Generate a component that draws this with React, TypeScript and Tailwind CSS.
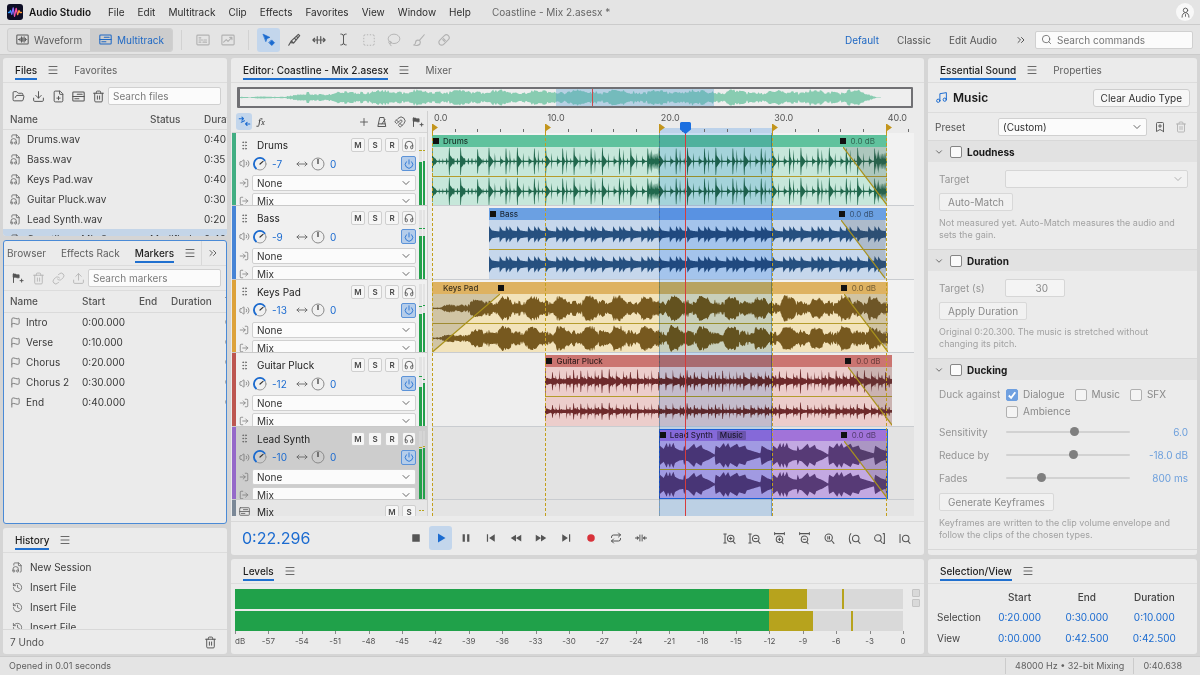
import type { ReactNode } from "react";
import {
  BookmarkPlus,
  ChevronDown,
  ChevronsRight,
  Download,
  FileAudio,
  FilePlus,
  Flag,
  FolderOpen,
  GripVertical,
  Headphones,
  History,
  Lasso,
  Link,
  LogIn,
  LogOut,
  Magnet,
  Menu,
  MoveHorizontal,
  Music,
  Plus,
  Power,
  Repeat,
  Search,
  SquareDashed,
  TextCursor,
  Trash2,
  Upload,
  Volume2,
} from "lucide-react";

const VIEW_SECONDS = 42.5;
const BAR = 2.5;
const SELECTION = { start: 20, end: 30 };
const PLAYHEAD = 22.296;
const SAMPLES_PER_SECOND = 22;

const pct = (seconds: number) => `${(seconds / VIEW_SECONDS) * 100}%`;

/* ---------- waveform data ---------- */

type Envelope = (t: number, channel: number) => number;
type Point = [number, number];

const noise = (n: number) => {
  const v = Math.sin(n * 127.1 + 311.7) * 43758.5453;
  return v - Math.floor(v);
};

function interpolate(points: Point[], x: number) {
  for (let i = 1; i < points.length; i++) {
    if (x <= points[i][0]) {
      const [x0, y0] = points[i - 1];
      const [x1, y1] = points[i];
      return y0 + ((y1 - y0) * (x - x0)) / (x1 - x0 || 1);
    }
  }
  return points[points.length - 1][1];
}

function drumHits() {
  const hits: [number, number, number][] = [
    [0, 0.75, 0.5],
    [1.5, 0.95, 0.5],
    [2.5, 0.95, 0.5],
    [4, 0.85, 0.5],
  ];
  for (let t = 0.3; t < 5; t += 0.32) hits.push([t, 0.22, 0.08]);
  for (let bar = 2; bar < 16; bar++) {
    const at = bar * BAR;
    hits.push(
      [at, 0.95, 0.45],
      [at + 0.52, 0.6, 0.1],
      [at + 1.02, 0.42, 0.35],
      [at + 1.5, 0.9, 0.25],
      [at + 1.84, 0.85, 0.14],
      [at + 2.2, 0.25, 0.16],
    );
  }
  for (const fill of [19, 39]) {
    for (let i = 0; i < 9; i++) hits.push([fill + i * 0.12, 0.95 - noise(i + 3) * 0.45, 0.2]);
  }
  return hits;
}

const DRUM_HITS = drumHits();

const drums: Envelope = (t) => {
  let level = 0.05;
  for (const [at, amp, decay] of DRUM_HITS) {
    const d = t - at;
    if (d < 0 || d > decay) continue;
    const body = d < 0.06 ? amp : amp * 0.55 * (1 - d / decay);
    level = Math.max(level, body);
  }
  return level;
};

const bass: Envelope = (t) => {
  const phase = t % BAR;
  const steps = [0, 0.94, 1.5, 1.8, BAR];
  const i = steps.findIndex((s, n) => phase >= s && phase < steps[n + 1]);
  const d = phase - steps[i];
  return 0.16 + 0.18 * Math.exp(-d * 1.6) + (d < 0.25 ? 0.24 * (1 - d / 0.25) : 0);
};

const KEY_SHAPE: Point[] = [[0, 0.5], [0.2, 0.7], [0.35, 0.94], [0.95, 0.9], [1.2, 0.74], [1.4, 0.52], [1.8, 0.64], [2.1, 0.5], [2.5, 0.46]];

const keys: Envelope = (t, channel) => {
  const n = Math.floor(t * 11) + channel * 91;
  const bar = Math.floor((t + 1.8) / BAR);
  const swell = 0.86 + 0.14 * noise(bar);
  const level = interpolate(KEY_SHAPE, (t + 1.8) % BAR) * swell - noise(n) * 0.26;
  return level * Math.min(1, 0.1 + t / 6);
};

const guitar: Envelope = (t, channel) => {
  const step = 0.625;
  const n = Math.floor(t / step);
  const d = t - n * step;
  const swell = Math.abs(Math.sin((t - 1.2) * 0.42));
  const core = 0.09 + (0.1 + 0.22 * swell) * Math.exp(-d * 3.5) + noise(Math.floor(t * 11) + channel * 7) * 0.08;
  const accent = d < 0.06 ? 0.6 + 0.25 * noise(n) : 0;
  const offbeat = noise(n + 40) > 0.45 && d > 0.3 && d < 0.37 ? 0.42 : 0;
  return Math.max(core, accent, offbeat) * (channel ? 0.72 : 1);
};

const LEAD_SHAPE: Point[] = [
  [0, 20], [2, 26], [14, 17], [23, 33], [27, 20], [33, 34], [36, 20], [43, 34], [48, 20], [60, 14], [73, 12],
  [75, 28], [80, 14], [88, 16], [105, 31], [111, 19], [127, 28], [131, 18], [150, 11], [167, 2], [169, 26],
  [182, 19], [194, 33], [199, 22], [207, 33], [213, 20], [234, 31], [240, 21], [258, 26], [263, 16], [304, 5],
  [307, 26], [325, 16], [339, 12], [340, 20],
];

const lead: Envelope = (t) => interpolate(LEAD_SHAPE, (t % 10) * 34) / 38;

const overview: Envelope = (t) => {
  const n = Math.floor(t * 11);
  const grow = t < 3 ? 0.12 : Math.min(1, 0.3 + (t - 3) / 7);
  const swell = 0.34 + 0.65 * interpolate(KEY_SHAPE, (t + 1.8) % BAR);
  const spike = [4.2, 7].some((at) => t >= at && t < at + 0.2) ? 0.65 : 0;
  const tail = t > 39.4 ? Math.max(0.02, 40.4 - t) : 1;
  return Math.max(spike, grow * (swell - noise(n) * 0.3)) * tail;
};

function wavePath(envelope: Envelope, seconds: number, channel: number) {
  const count = Math.round(seconds * SAMPLES_PER_SECOND);
  const top: string[] = [];
  const bottom: string[] = [];
  for (let i = 0; i <= count; i++) {
    const level = Math.max(0.03, Math.min(0.98, envelope(i / SAMPLES_PER_SECOND, channel)));
    top.push(`${i} ${(-level).toFixed(3)}`);
    bottom.unshift(`${i} ${level.toFixed(3)}`);
  }
  return `M${top.join("L")}L${bottom.join("L")}Z`;
}

type Clip = {
  start: number;
  end: number;
  fadeIn?: number;
  fadeOut: number;
  tag?: string;
  head: string;
  body: string;
  wave: string;
  paths: string[];
};

type Track = {
  name: string;
  volume: number;
  strip: string;
  meters: [number, number];
  peaks: [number, number];
  peakColor: string;
  selected?: boolean;
  clip: Clip;
};

function makeClip(envelope: Envelope, clip: Omit<Clip, "paths">): Clip {
  const seconds = clip.end - clip.start;
  return { ...clip, paths: [0, 1].map((channel) => wavePath(envelope, seconds, channel)) };
}

const TRACKS: Track[] = [
  {
    name: "Drums", volume: -7, strip: "bg-[#41ae82]", meters: [64, 65], peaks: [79, 79], peakColor: "bg-[#b9a61c]",
    clip: makeClip(drums, { start: 0, end: 40.1, fadeOut: 3.9, head: "bg-[#5fc29d]", body: "bg-[#c6e7da]", wave: "fill-[#21684d]" }),
  },
  {
    name: "Bass", volume: -9, strip: "bg-[#4684d6]", meters: [63, 63], peaks: [73, 73], peakColor: "bg-[#22a04a]",
    clip: makeClip(bass, { start: 5, end: 40, fadeOut: 3.9, head: "bg-[#6ba0e2]", body: "bg-[#c6d7ec]", wave: "fill-[#26507f]" }),
  },
  {
    name: "Keys Pad", volume: -13, strip: "bg-[#dda23a]", meters: [56, 58], peaks: [66, 68], peakColor: "bg-[#22a04a]",
    clip: makeClip(keys, { start: 0, end: 40.2, fadeIn: 6, fadeOut: 3.9, head: "bg-[#deb261]", body: "bg-[#f2e3bb]", wave: "fill-[#77591f]" }),
  },
  {
    name: "Guitar Pluck", volume: -12, strip: "bg-[#bd5650]", meters: [56, 62], peaks: [71, 67], peakColor: "bg-[#22a04a]",
    clip: makeClip(guitar, { start: 10, end: 40.6, fadeOut: 3.9, head: "bg-[#cb7571]", body: "bg-[#eccdcb]", wave: "fill-[#6e2a2b]" }),
  },
  {
    name: "Lead Synth", volume: -10, strip: "bg-[#9568c9]", meters: [73, 74], peaks: [75, 76], peakColor: "bg-[#b9a61c]", selected: true,
    clip: makeClip(lead, { start: 20, end: 40.2, fadeOut: 3.9, tag: "Music", head: "bg-[#a173d9]", body: "bg-[#c3a9e2]", wave: "fill-[#573a76]" }),
  },
];

const OVERVIEW_PATH = wavePath(overview, 40.6, 0);

/* ---------- small icons ---------- */

function Glyph({ children, className = "size-3" }: { children: ReactNode; className?: string }) {
  return (
    <svg viewBox="0 0 16 16" className={`shrink-0 ${className}`} fill="none" stroke="currentColor" strokeWidth="1.3" strokeLinecap="round" strokeLinejoin="round" aria-hidden="true">
      {children}
    </svg>
  );
}

const WaveBoxIcon = () => (
  <Glyph className="size-[13px]">
    <rect x="1" y="2.5" width="14" height="11" rx="1" />
    <path d="M3 8h1M5 6.5v3M6.7 4.8v6.4M8.3 6v4M10 4.8v6.4M11.6 6.5v3M13 8h.2" />
  </Glyph>
);

const TracksIcon = ({ className = "size-[13px]" }: { className?: string }) => (
  <Glyph className={className}>
    <rect x="1" y="2.5" width="14" height="11" rx="1" />
    <path d="M1 8h14M6.5 5.3h6M3.5 10.8h5" />
  </Glyph>
);

const SpectralIcon = () => (
  <Glyph className="size-[14px]">
    <rect x="1" y="2.5" width="14" height="11" rx="1" />
    <path d="M3.5 5.5h2M3.5 8h4M9 8h3M3.5 10.5h2M8 10.5h4" />
  </Glyph>
);

const ChartBoxIcon = () => (
  <Glyph className="size-[14px]">
    <rect x="1" y="2.5" width="14" height="11" rx="1" />
    <path d="M3 10.5l3-3 2 2L12.5 5M10 5h2.5v2.5" />
  </Glyph>
);

const MoveToolIcon = () => (
  <Glyph className="size-[14px]">
    <path d="M1.5 1.5l7.5 3.5-3.3 1.2-1.2 3.3z" fill="currentColor" strokeWidth="0.8" />
    <path d="M11.2 8.2l3 3-3 3-3-3z" fill="currentColor" strokeWidth="1" />
  </Glyph>
);

const RazorIcon = () => (
  <Glyph className="size-[14px]">
    <path d="M13 1.5l1.5 1.5-7 8.5-2.5-2.5zM5 9l-3 5M7.500 11.500L4.500 11M9 6.500l1.500 1.500M11 4l1.500 1.500" />
  </Glyph>
);

const SlipIcon = () => (
  <Glyph className="size-[14px]">
    <path d="M1 8h14M3 6L1 8l2 2M13 6l2 2-2 2M6 4v8M10 4v8" />
  </Glyph>
);

const BrushIcon = () => (
  <Glyph className="size-[14px]">
    <path d="M14 2L8.5 8.5M8.5 8.5c-2-1-4.5 0-4.5 2.5 0 1.5-.8 2.3-2 2.8 3.5 1 7.5.2 7.500-3 0-1-.4-1.800-1-2.300z" />
  </Glyph>
);

const HealIcon = () => (
  <Glyph className="size-[14px]">
    <rect x="1" y="4.8" width="14" height="6.4" rx="3.2" transform="rotate(-45 8 8)" />
    <path d="M7.500 6.500l2 2M6.500 7.500l2 2" />
  </Glyph>
);

const FlagPlusIcon = () => (
  <Glyph className="size-3">
    <path d="M2 14V2.5" />
    <path d="M2 2.8h3l1 1h3.500v4H6.500l-1-.8H2z" fill="currentColor" strokeWidth="1" />
    <path d="M12.8 9.500v4M10.800 11.500h4" />
  </Glyph>
);

const MetronomeIcon = () => (
  <Glyph className="size-3">
    <path d="M5.5 2h5l2.5 12H3zM3.8 10.5h8.4M8 10.5l4-6" />
  </Glyph>
);

const SnapIcon = () => (
  <Glyph className="size-[13px]">
    <path d="M1.5 4.5h5M4.8 2.5l2 2-2 2M14.5 11h-5M11.2 9l-2 2 2 2M4 9l4-2" />
  </Glyph>
);

const PersonIcon = () => (
  <Glyph className="size-[11px]">
    <circle cx="8" cy="4.8" r="3.2" />
    <path d="M3 14.800c0-4 2-6.500 5-6.500s5 2.500 5 6.500M8 11v2.500" />
  </Glyph>
);

function Logo() {
  return (
    <svg viewBox="0 0 16 16" className="size-4" aria-hidden="true">
      <rect width="16" height="16" rx="3" fill="#0d0d25" />
      <g fill="none" strokeWidth="1.3" strokeLinecap="round" strokeLinejoin="round">
        <path d="M1.5 8.5h1l1-2 1.2 3.5" stroke="#2f9bff" />
        <path d="M4.7 10L6.2 4l1.3 8" stroke="#8a6bff" />
        <path d="M7.5 12L9.2 4.5l1.4 6" stroke="#ff4fa0" />
        <path d="M10.6 10.5L12 6.5l1 2h1.5" stroke="#ff9a3c" />
      </g>
    </svg>
  );
}

/* ---------- shared controls ---------- */

function IconButton({ label, active, disabled, className = "size-5", children }: { label: string; active?: boolean; disabled?: boolean; className?: string; children: ReactNode }) {
  const tone = active ? "bg-[#c3d6ec] text-[#1b6bd0]" : disabled ? "text-[#b2b2b2]" : "text-[#555]";
  return (
    <button type="button" aria-label={label} disabled={disabled} className={`flex shrink-0 items-center justify-center rounded-[3px] ${tone} ${className}`}>
      {children}
    </button>
  );
}

function Tab({ label, active }: { label: string; active?: boolean }) {
  return (
    <button
      type="button"
      className={`h-[22px] shrink-0 border-b-2 pt-1 leading-4 whitespace-nowrap ${active ? "border-[#2070cf] font-medium text-[#1f1f1f]" : "border-transparent text-[#606060]"}`}
    >
      {label}
    </button>
  );
}

function PanelMenu({ label }: { label: string }) {
  return (
    <button type="button" aria-label={label} className="flex h-6 shrink-0 items-center text-[#5a5a5a]">
      <Menu className="size-3" strokeWidth={1.8} />
    </button>
  );
}

function SearchBox({ label }: { label: string }) {
  return (
    <input
      type="search"
      aria-label={label}
      placeholder={label}
      className="h-[18px] min-w-0 flex-1 rounded-[2px] border border-[#d0d0d0] bg-[#fbfbfb] px-1 leading-4 placeholder:text-[#7a7a7a]"
    />
  );
}

function Picker({ label, value, disabled, className = "" }: { label: string; value: string; disabled?: boolean; className?: string }) {
  return (
    <span className={`relative block min-w-0 ${className}`}>
      <select
        aria-label={label}
        disabled={disabled}
        className={`block size-full appearance-none rounded-[2px] border px-1 leading-3 ${disabled ? "border-[#d6d6d6] bg-[#f2f2f2]" : "border-[#d0d0d0] bg-[#fbfbfb] text-[#303030]"}`}
      >
        <option>{value}</option>
      </select>
      <ChevronDown className={`pointer-events-none absolute top-1/2 right-1 size-3 -translate-y-1/2 ${disabled ? "text-[#a8a8a8]" : "text-[#555]"}`} strokeWidth={1.8} />
    </span>
  );
}

const PANEL = "flex min-h-0 min-w-0 flex-col overflow-hidden rounded-[3px] bg-[#ebebeb]";
const TAB_ROW = "flex h-[25px] shrink-0 gap-[10px] border-b border-[#dcdcdc]";

/* ---------- top bars ---------- */

const MENUS = ["File", "Edit", "Multitrack", "Clip", "Effects", "Favorites", "View", "Window", "Help"];

function TitleBar() {
  return (
    <header className="flex h-[25px] shrink-0 items-center border-b border-[#cbcbcb] bg-[#e4e4e4] pr-[6px] pl-[7px]">
      <Logo />
      <h1 className="ml-[6px] font-semibold text-[#141414]">Audio Studio</h1>
      <nav className="ml-[17px] flex gap-[13px]">
        {MENUS.map((menu) => (
          <button key={menu} type="button" className="text-[#2e2e2e]">{menu}</button>
        ))}
      </nav>
      <span className="ml-[21px] flex-1 text-[#666]">Coastline - Mix 2.asesx *</span>
      <button type="button" aria-label="Account" className="flex size-[18px] items-center justify-center rounded-full bg-[#f8f8f8] text-[#555]">
        <PersonIcon />
      </button>
    </header>
  );
}

function ToolBar() {
  return (
    <div className="flex h-[30px] shrink-0 items-center border-b border-[#cbcbcb] bg-[#e4e4e4] pr-[7px] pl-[7px]">
      <div className="flex h-6 overflow-hidden rounded-[3px] border border-[#d0d0d0] bg-[#dfdfdf]">
        <button type="button" className="flex w-[82px] items-center gap-[5px] pl-2 text-[#5c5c5c]">
          <WaveBoxIcon />
          Waveform
        </button>
        <button type="button" aria-pressed="true" className="flex w-[82px] items-center gap-[5px] bg-[#cdcdcd] pl-[9px] text-[#2069c4]">
          <TracksIcon />
          Multitrack
        </button>
      </div>
      <div className="mx-2 h-5 w-px bg-[#d2d2d2]" />
      <div className="flex">
        <IconButton label="Spectral display" disabled className="h-6 w-[25px]"><SpectralIcon /></IconButton>
        <IconButton label="Pitch display" disabled className="h-6 w-[25px]"><ChartBoxIcon /></IconButton>
      </div>
      <div className="mx-2 h-5 w-px bg-[#d2d2d2]" />
      <div className="flex gap-[2px]">
        <IconButton label="Move" active className="h-6 w-[23px]"><MoveToolIcon /></IconButton>
        <IconButton label="Razor" className="h-6 w-[23px]"><RazorIcon /></IconButton>
        <IconButton label="Slip" className="h-6 w-[23px]"><SlipIcon /></IconButton>
        <IconButton label="Time selection" className="h-6 w-[23px]"><TextCursor className="size-[13px]" strokeWidth={1.8} /></IconButton>
        <IconButton label="Marquee selection" disabled className="h-6 w-[23px]"><SquareDashed className="size-[14px]" strokeWidth={1.6} /></IconButton>
        <IconButton label="Lasso selection" disabled className="h-6 w-[23px]"><Lasso className="size-[14px]" strokeWidth={1.6} /></IconButton>
        <IconButton label="Brush selection" disabled className="h-6 w-[23px]"><BrushIcon /></IconButton>
        <IconButton label="Spot healing" disabled className="h-6 w-[23px]"><HealIcon /></IconButton>
      </div>
      <div className="ml-auto flex items-center gap-[18px] text-[#555]">
        <button type="button" className="text-[#2069c4]">Default</button>
        <button type="button">Classic</button>
        <button type="button">Edit Audio</button>
        <button type="button" aria-label="More workspaces"><ChevronsRight className="size-3" strokeWidth={2} /></button>
      </div>
      <label className="ml-2 flex h-[18px] w-[158px] items-center gap-[5px] rounded-[2px] border border-[#d0d0d0] bg-[#fbfbfb] pl-[5px]">
        <Search className="size-[11px] shrink-0 text-[#666]" strokeWidth={1.8} />
        <input type="search" aria-label="Search commands" placeholder="Search commands" className="min-w-0 flex-1 bg-transparent placeholder:text-[#757575]" />
      </label>
    </div>
  );
}

/* ---------- left column ---------- */

const FILES = [
  ["Drums.wav", "", "0:40.000"],
  ["Bass.wav", "", "0:35.000"],
  ["Keys Pad.wav", "", "0:40.000"],
  ["Guitar Pluck.wav", "", "0:30.600"],
  ["Lead Synth.wav", "", "0:20.300"],
  ["Coastline - Mix 2.asesx", "Modified", "0:40.638"],
];

function FilesPanel() {
  return (
    <section className={`${PANEL} h-[178px] shrink-0`}>
      <div className={`${TAB_ROW} pl-3`}>
        <Tab label="Files" active />
        <PanelMenu label="Files panel menu" />
        <span className="ml-[5px] flex"><Tab label="Favorites" /></span>
      </div>
      <div className="flex h-[26px] shrink-0 items-center pr-[6px] pl-[5px]">
        <IconButton label="Open file"><FolderOpen className="size-[13px]" strokeWidth={1.8} /></IconButton>
        <IconButton label="Import file"><Download className="size-[13px]" strokeWidth={1.8} /></IconButton>
        <IconButton label="New file"><FilePlus className="size-[13px]" strokeWidth={1.8} /></IconButton>
        <IconButton label="New multitrack session"><TracksIcon /></IconButton>
        <IconButton label="Remove file"><Trash2 className="size-[13px]" strokeWidth={1.8} /></IconButton>
        <SearchBox label="Search files" />
      </div>
      <div className="min-h-0 flex-1 overflow-hidden">
        <table className="w-[270px] table-fixed text-left">
          <thead>
            <tr className="h-5 border-b border-[#dadada] text-[#555]">
              <th className="w-[140px] pl-[7px] font-medium">Name</th>
              <th className="w-[54px] pl-[7px] font-medium">Status</th>
              <th className="pl-[7px] font-medium">Duration</th>
            </tr>
          </thead>
          <tbody>
            {FILES.map(([name, status, duration], index) => (
              <tr key={name} className={`h-5 ${index === 5 ? "bg-[#c4d5e8]" : ""}`}>
                <td className="pl-[7px]">
                  <span className="flex items-center gap-[6px] whitespace-nowrap">
                    <FileAudio className="size-[11px] shrink-0 text-[#666]" strokeWidth={1.8} />
                    {name}
                  </span>
                </td>
                <td className="pl-[7px]">{status}</td>
                <td className="pl-[7px]">{duration.slice(0, 4)}</td>
              </tr>
            ))}
          </tbody>
        </table>
      </div>
    </section>
  );
}

const MARKERS = [
  ["Intro", "0:00.000"],
  ["Verse", "0:10.000"],
  ["Chorus", "0:20.000"],
  ["Chorus 2", "0:30.000"],
  ["End", "0:40.000"],
];

function MarkersPanel() {
  return (
    <section className={`${PANEL} flex-1 border border-[#4a8ad6]`}>
      <div className="flex h-[25px] shrink-0 border-b border-[#dcdcdc] pl-[3px]">
        <Tab label="Browser" />
        <span className="ml-[15px] flex"><Tab label="Effects Rack" /></span>
        <span className="ml-[15px] flex"><Tab label="Markers" active /></span>
        <span className="ml-[10px] flex"><PanelMenu label="Markers panel menu" /></span>
        <button type="button" aria-label="More panels" className="ml-auto flex w-[25px] items-center justify-center border-l border-[#d8d8d8] pr-[3px] text-[#555]">
          <ChevronsRight className="size-3" strokeWidth={1.8} />
        </button>
      </div>
      <div className="flex h-[25px] shrink-0 items-center border-b border-[#dcdcdc] pr-[5px] pl-1">
        <IconButton label="Add marker"><FlagPlusIcon /></IconButton>
        <IconButton label="Delete marker" disabled><Trash2 className="size-[13px]" strokeWidth={1.6} /></IconButton>
        <IconButton label="Merge markers" disabled><Link className="size-[13px]" strokeWidth={1.6} /></IconButton>
        <IconButton label="Export markers" disabled><Upload className="size-[13px]" strokeWidth={1.6} /></IconButton>
        <SearchBox label="Search markers" />
      </div>
      <div className="min-h-0 flex-1 overflow-hidden">
        <table className="w-[260px] table-fixed text-left">
          <thead>
            <tr className="h-[21px] border-b border-[#dadada] text-[#555]">
              <th className="w-[72px] pl-[6px] font-medium">Name</th>
              <th className="w-[57px] pl-[6px] font-medium">Start</th>
              <th className="w-[32px] pl-[6px] font-medium">End</th>
              <th className="w-[54px] pl-[6px] font-medium">Duration</th>
              <th className="pl-[6px] font-medium">Type</th>
            </tr>
          </thead>
          <tbody>
            {MARKERS.map(([name, start]) => (
              <tr key={name} className="h-5">
                <td className="pl-[6px]">
                  <span className="flex items-center gap-[5px] whitespace-nowrap">
                    <Flag className="size-[11px] shrink-0 text-[#666]" strokeWidth={1.8} />
                    {name}
                  </span>
                </td>
                <td className="pl-[6px]">{start}</td>
                <td />
                <td />
                <td className="pl-[6px]">Cue</td>
              </tr>
            ))}
          </tbody>
        </table>
      </div>
    </section>
  );
}

function HistoryPanel() {
  return (
    <section className={`${PANEL} h-[126px] shrink-0`}>
      <div className={`${TAB_ROW} pl-3`}>
        <Tab label="History" active />
        <PanelMenu label="History panel menu" />
      </div>
      <ul className="min-h-0 flex-1 overflow-hidden pt-1 pl-[9px]">
        {["New Session", "Insert File", "Insert File", "Insert File"].map((entry, index) => (
          <li key={index} className="flex h-5 items-center gap-[7px]">
            {index === 0 ? (
              <FileAudio className="size-[11px] text-[#666]" strokeWidth={1.8} />
            ) : (
              <History className="size-[11px] text-[#666]" strokeWidth={1.8} />
            )}
            {entry}
          </li>
        ))}
      </ul>
      <div className="flex h-[25px] shrink-0 items-center justify-between border-t border-[#d8d8d8] pr-[7px] pl-[7px] text-[#555]">
        <span>7 Undo</span>
        <IconButton label="Clear history"><Trash2 className="size-[13px]" strokeWidth={1.8} /></IconButton>
      </div>
    </section>
  );
}

/* ---------- editor ---------- */

function Overview() {
  return (
    <div className="relative mt-1 mr-[11px] ml-[6px] h-[21px] shrink-0 rounded-[1px] border-2 border-l-[3px] border-[#707074] bg-[#eeeeee]">
      <svg viewBox={`0 -1 ${VIEW_SECONDS * SAMPLES_PER_SECOND} 2`} preserveAspectRatio="none" className="block size-full fill-[#88ccb1]" aria-hidden="true">
        <path d={OVERVIEW_PATH} />
      </svg>
      <div className="absolute inset-y-0 bg-[#4f9ad0]/35" style={{ left: pct(SELECTION.start), width: pct(SELECTION.end - SELECTION.start) }} />
      <div className="absolute inset-y-0 w-px bg-[#cc4a4a]" style={{ left: pct(PLAYHEAD) }} />
    </div>
  );
}

function VolumeKnob() {
  return (
    <svg viewBox="0 0 14 14" className="size-[14px] shrink-0" fill="none" strokeLinecap="round" aria-hidden="true">
      <circle cx="7" cy="7" r="6" stroke="#9a9a9a" />
      <path d="M3 11.5A6 6 0 1 1 11.6 3.2" stroke="#1b6bd0" strokeWidth="1.8" />
      <path d="M7 7l3-2.6" stroke="#333" strokeWidth="1.2" />
    </svg>
  );
}

function PanKnob() {
  return (
    <svg viewBox="0 0 14 14" className="size-[14px] shrink-0" fill="none" aria-hidden="true">
      <circle cx="7" cy="7" r="6" stroke="#8a8a8a" />
      <path d="M7 2v5" stroke="#333" strokeWidth="1.2" />
    </svg>
  );
}

function TrackButton({ label, children }: { label: string; children: ReactNode }) {
  return (
    <button type="button" aria-label={label} className="flex size-[14px] shrink-0 items-center justify-center rounded-[2px] border border-[#cfcfcf] bg-[#f6f6f6] text-[8px] font-semibold text-[#4a4a4a]">
      {children}
    </button>
  );
}

function TrackMeter({ track }: { track: Track }) {
  return (
    <div className="flex w-[6px] shrink-0 gap-[1px] pt-1" aria-hidden="true">
      {track.meters.map((level, index) => (
        <div key={index} className="relative flex-1 bg-[#dadada]/60">
          <div className="absolute inset-x-0 bottom-0 bg-[#22a04a]" style={{ height: `${level}%` }} />
          <div className={`absolute inset-x-0 h-px ${track.peakColor}`} style={{ bottom: `${track.peaks[index]}%` }} />
        </div>
      ))}
    </div>
  );
}

function TrackHeader({ track }: { track: Track }) {
  return (
    <div className={`flex min-h-0 flex-1 basis-0 overflow-hidden border-b border-[#c9c9c9] ${track.selected ? "bg-[#cdcdcd]" : "bg-[#f0f0f0]"}`}>
      <div className={`w-1 shrink-0 ${track.strip}`} />
      <div className="min-w-0 flex-1 pt-[5px] pr-[3px] pl-[3px]">
        <div className="flex h-[14px] items-center gap-[3px]">
          <GripVertical className="size-[11px] shrink-0 text-[#6a6a6a]" strokeWidth={2} />
          <span className="flex-1 pl-1 leading-[14px] whitespace-nowrap text-[#222]">{track.name}</span>
          <TrackButton label={`Mute ${track.name}`}>M</TrackButton>
          <TrackButton label={`Solo ${track.name}`}>S</TrackButton>
          <TrackButton label={`Record ${track.name}`}>R</TrackButton>
          <TrackButton label={`Monitor ${track.name}`}><Headphones className="size-[10px]" strokeWidth={2} /></TrackButton>
        </div>
        <div className="mt-1 flex h-[15px] items-center text-[#1b6bd0]">
          <Volume2 className="size-[11px] shrink-0 text-[#777]" strokeWidth={1.8} />
          <span className="ml-[3px] flex"><VolumeKnob /></span>
          <span className="ml-[5px] w-6">{track.volume}</span>
          <MoveHorizontal className="size-[12px] shrink-0 text-[#666]" strokeWidth={1.8} />
          <span className="ml-[3px] flex"><PanKnob /></span>
          <span className="ml-[5px] flex-1">0</span>
          <button type="button" aria-label={`${track.name} power`} className="flex size-[15px] items-center justify-center rounded-[2px] border border-[#5c93d8] bg-[#b5cdea]">
            <Power className="size-[10px]" strokeWidth={2} />
          </button>
        </div>
        <div className="mt-1 flex items-center gap-[3px]">
          <LogIn className="size-[10px] shrink-0 text-[#777]" strokeWidth={1.8} />
          <Picker label={`${track.name} input`} value="None" className="h-[16px] flex-1" />
        </div>
        <div className="mt-[2px] flex items-center gap-[3px]">
          <LogOut className="size-[10px] shrink-0 text-[#777]" strokeWidth={1.8} />
          <Picker label={`${track.name} output`} value="Mix" className="h-[16px] flex-1" />
        </div>
      </div>
      <TrackMeter track={track} />
      <div className="w-[2px]" />
    </div>
  );
}

function TrackHeaders() {
  return (
    <div className="flex w-[196px] shrink-0 flex-col border-r border-[#cfcfcf]">
      <div className="flex h-[22px] shrink-0 items-center border-b border-[#d5d5d5] pl-1">
        <IconButton label="Snap" active className="h-[17px] w-4"><SnapIcon /></IconButton>
        <button type="button" aria-label="Effects" className="ml-[6px] font-serif text-[11px] text-[#444] italic">
          f<sub className="bottom-0 text-[8px]">x</sub>
        </button>
        <div className="ml-auto flex">
          <IconButton label="Add track" className="size-[18px]"><Plus className="size-3" strokeWidth={1.8} /></IconButton>
          <IconButton label="Metronome" className="size-[18px]"><MetronomeIcon /></IconButton>
          <IconButton label="Snapping" className="size-[18px]"><Magnet className="size-3" strokeWidth={1.8} /></IconButton>
          <IconButton label="Add marker" className="size-[18px]"><FlagPlusIcon /></IconButton>
        </div>
      </div>
      {TRACKS.map((track) => (
        <TrackHeader key={track.name} track={track} />
      ))}
      <div className="flex h-4 shrink-0 overflow-hidden bg-[#e6e6e6]">
        <div className="w-1 shrink-0 bg-[#7b8897]" />
        <div className="flex h-[23px] flex-1 items-center gap-[3px] pr-[3px] pl-[3px]">
          <TracksIcon className="size-[11px] text-[#666]" />
          <span className="flex-1 pl-1 text-[#222]">Mix</span>
          <TrackButton label="Mute Mix">M</TrackButton>
          <TrackButton label="Solo Mix">S</TrackButton>
        </div>
        <div className="flex w-2 gap-[1px] pt-[10px]">
          <div className="h-px w-[2px] bg-[#b9a61c]" />
          <div className="h-px w-[2px] bg-[#b9a61c]" />
        </div>
      </div>
    </div>
  );
}

function Ruler() {
  const ticks = Array.from({ length: 22 }, (_, i) => i * 2);
  return (
    <div className="relative h-[22px] shrink-0">
      <div className="absolute bottom-0 h-[5px] bg-[#bcd2ea]" style={{ left: pct(SELECTION.start), width: pct(SELECTION.end - SELECTION.start) }} />
      {ticks.map((t) =>
        t % 10 === 0 ? (
          <div key={t} className="absolute inset-y-0" style={{ left: pct(t) }}>
            <span className="absolute top-[2px] left-[2px] text-[9px] leading-[10px] text-[#555]">{t.toFixed(1)}</span>
            <svg viewBox="0 0 6 9" className="absolute bottom-0 left-0 h-[9px] w-[6px] fill-[#c3951c]" aria-hidden="true">
              <path d="M0 0h1l5 3.5L1 7v2H0z" />
            </svg>
          </div>
        ) : (
          <div key={t} className="absolute bottom-[1px] h-[3px] w-px bg-[#6c6c6c]" style={{ left: pct(t) }} />
        ),
      )}
    </div>
  );
}

function Fade({ kind, seconds, total }: { kind: "in" | "out"; seconds: number; total: number }) {
  const shade = kind === "in" ? "0,0 100,0 0,100" : "0,0 100,0 100,100";
  const line = kind === "in" ? "M0 100L100 0" : "M0 0L100 100";
  return (
    <svg
      viewBox="0 0 100 100"
      preserveAspectRatio="none"
      className={`absolute inset-y-0 h-full ${kind === "in" ? "left-0" : "right-0"}`}
      style={{ width: `${(seconds / total) * 100}%` }}
      aria-hidden="true"
    >
      <polygon points={shade} className="fill-[#4a4a4a]/20" />
      <path d={line} fill="none" stroke="#a9921c" strokeWidth="1.2" vectorEffect="non-scaling-stroke" />
    </svg>
  );
}

function ClipView({ track }: { track: Track }) {
  const { clip } = track;
  const seconds = clip.end - clip.start;
  const share = (s: number) => `${(s / seconds) * 100}%`;
  return (
    <div
      className="absolute top-[2px] bottom-0 flex flex-col overflow-hidden"
      style={{ left: pct(clip.start), width: pct(seconds) }}
    >
      <div className={`relative h-3 shrink-0 text-[8px] leading-3 font-medium text-black/75 ${clip.head}`}>
        <span className="absolute top-[3px] size-[6px] bg-[#111]" style={{ left: clip.fadeIn ? share(clip.fadeIn - 0.2) : "1px" }} />
        <span className="absolute left-[11px] flex gap-1 whitespace-nowrap">
          {track.name}
          {clip.tag && <span className="mt-[2px] h-[9px] rounded-[1px] bg-black/20 px-[3px] leading-[9px]">{clip.tag}</span>}
        </span>
        <span className="absolute top-[3px] size-[6px] bg-[#111]" style={{ left: share(seconds - clip.fadeOut - 0.25) }} />
        <span className="absolute ml-2 font-normal text-black/50" style={{ left: share(seconds - clip.fadeOut) }}>0.0 dB</span>
      </div>
      <div className={`relative flex min-h-0 flex-1 flex-col ${clip.body}`}>
        {clip.paths.map((path, index) => (
          <div key={index} className={`min-h-0 flex-1 ${index ? "border-t border-[#b59c2c]" : ""}`}>
            <svg viewBox={`0 -1 ${Math.round(seconds * SAMPLES_PER_SECOND)} 2`} preserveAspectRatio="none" className={`block size-full ${clip.wave}`} aria-hidden="true">
              <path d={path} />
            </svg>
          </div>
        ))}
        {clip.fadeIn && <Fade kind="in" seconds={clip.fadeIn} total={seconds} />}
        <Fade kind="out" seconds={clip.fadeOut} total={seconds} />
      </div>
      {track.selected && <div className="pointer-events-none absolute inset-0 border border-[#1f68d8]" />}
    </div>
  );
}

function Timeline() {
  return (
    <div className="relative mr-[10px] ml-1 flex min-w-0 flex-1 flex-col">
      <Ruler />
      <div className="relative flex min-h-0 flex-1 flex-col overflow-hidden">
        {TRACKS.map((track, index) => (
          <div key={track.name} className={`relative min-h-0 flex-1 basis-0 border-b border-[#c9ccd0] ${track.selected ? "bg-[#e3e3e3]" : index % 2 ? "bg-[#eeeeee]" : "bg-[#f2f2f2]"}`}>
            <ClipView track={track} />
          </div>
        ))}
        <div className="h-4 shrink-0 bg-[#e4e4e4]" />
        <div
          className="absolute inset-y-0 border-x border-[#7fb0e8] bg-[#d3e9ff] mix-blend-multiply"
          style={{ left: pct(SELECTION.start), width: pct(SELECTION.end - SELECTION.start) }}
        />
        {[0, 10, 20, 30, 40].map((t) => (
          <div key={t} className={`absolute inset-y-0 border-l border-dashed ${t === 20 ? "border-[#c3a01c]/20" : "border-[#c3a01c]"}`} style={{ left: pct(t) }} />
        ))}
      </div>
      <div className="absolute top-[11px] bottom-0 w-px bg-[#d63c3c]" style={{ left: pct(PLAYHEAD) }}>
        <svg viewBox="0 0 11 12" className="absolute top-0 left-[-5px] h-3 w-[11px] fill-[#1b6fe0]" aria-hidden="true">
          <path d="M1.5 0h8A1.5 1.5 0 0 1 11 1.5v6L5.5 12 0 7.5v-6A1.5 1.5 0 0 1 1.5 0z" />
        </svg>
      </div>
    </div>
  );
}

const TRANSPORT: [string, ReactNode][] = [
  ["Stop", <rect x="3" y="3" width="10" height="10" rx="0.5" fill="currentColor" stroke="none" />],
  ["Play", <path d="M4 2l10 6-10 6z" fill="currentColor" stroke="none" />],
  ["Pause", <path d="M3.5 3h3v10h-3zM9.5 3h3v10h-3z" fill="currentColor" stroke="none" />],
  ["Go to start", <path d="M2.5 3h1.6v10H2.5zM13 3v10L5.5 8z" fill="currentColor" stroke="none" />],
  ["Rewind", <path d="M8 3.5v9L1 8zM15 3.5v9L8 8z" fill="currentColor" stroke="none" />],
  ["Fast forward", <path d="M1 3.5L8 8l-7 4.5zM8 3.5L15 8l-7 4.5z" fill="currentColor" stroke="none" />],
  ["Go to end", <path d="M3 3l7.5 5L3 13zM12 3h1.6v10H12z" fill="currentColor" stroke="none" />],
  ["Record", <circle cx="8" cy="8" r="5" fill="#d8323a" stroke="none" />],
];

const LENS = <path d="M12.5 11.500l2.300 2.500M5.500 8a4 4 0 1 0 8 0a4 4 0 1 0-8 0" />;
const LOW_LENS = <path d="M10.500 12l2 2.500M4 9a4 4 0 1 0 8 0a4 4 0 1 0-8 0M2 2h12M2 .8v2.400M14 .8v2.400" />;

const ZOOMS: [string, ReactNode][] = [
  ["Zoom in vertically", <>{LENS}<path d="M1 2.5h3M1 13.5h3M2.5 2.5v11M8 8h3M9.5 6.5v3" /></>],
  ["Zoom out vertically", <>{LENS}<path d="M1 2.5h3M1 13.5h3M2.5 2.5v11M8 8h3" /></>],
  ["Zoom in", <>{LOW_LENS}<path d="M6.5 9h3M8 7.5v3" /></>],
  ["Zoom out", <>{LOW_LENS}<path d="M6.5 9h3" /></>],
  ["Zoom to full", <><circle cx="7" cy="7" r="4.5" /><path d="M10.5 10.5L13.5 14M6 5.500v3M8 5.500v3" /></>],
  ["Zoom to in point", <>{LENS}<path d="M3.5 2C1 4.500 1 11.500 3.500 14" /></>],
  ["Zoom to out point", <><circle cx="6" cy="7.5" r="4" /><path d="M9 10.5l2 2.500M12.500 2h1.500v12h-1.500" /></>],
  ["Zoom to selection", <>{LENS}<path d="M2.5 3v10" /></>],
];

function Transport() {
  return (
    <div className="flex h-[34px] shrink-0 items-center border-t border-[#d9d9d9] pr-2 pb-[1px] pl-[11px]">
      <output aria-label="Playhead time" className="w-[162px] text-[16px] leading-5 text-[#1b6bd0]">0:22.296</output>
      <div className="flex gap-[2px]">
        {TRANSPORT.map(([label, icon]) => (
          <IconButton key={label} label={label} active={label === "Play"} className="h-6 w-[23px]">
            <Glyph className="size-3">{icon}</Glyph>
          </IconButton>
        ))}
        <IconButton label="Loop playback" className="h-6 w-[23px]"><Repeat className="size-3" strokeWidth={2} /></IconButton>
        <IconButton label="Skip selection" className="h-6 w-[23px]">
          <Glyph className="size-3"><path d="M.5 8H4M6.5 4v8M9.5 4v8M12 8h3.5M3.5 6.5L5 8 3.5 9.5zM12.5 6.5L11 8l1.5 1.5z" /></Glyph>
        </IconButton>
      </div>
      <div className="ml-auto flex gap-[2px]">
        {ZOOMS.map(([label, icon]) => (
          <IconButton key={label} label={label} className="h-6 w-[23px]">
            <Glyph className="size-[13px]">{icon}</Glyph>
          </IconButton>
        ))}
      </div>
    </div>
  );
}

function EditorPanel() {
  return (
    <section className={`${PANEL} flex-1`}>
      <div className={`${TAB_ROW} pl-3`}>
        <Tab label="Editor: Coastline - Mix 2.asesx" active />
        <PanelMenu label="Editor panel menu" />
        <span className="ml-[5px] flex"><Tab label="Mixer" /></span>
      </div>
      <Overview />
      <div className="mt-[3px] flex min-h-0 flex-1 pl-px">
        <TrackHeaders />
        <Timeline />
      </div>
      <div className="h-[5px] shrink-0" />
      <Transport />
    </section>
  );
}

function LevelsPanel() {
  const bars = [
    { level: 51.4, peak: 54.5 },
    { level: 51.9, peak: 55.3 },
  ];
  return (
    <section className={`${PANEL} h-[95px] shrink-0`}>
      <div className={`${TAB_ROW} pl-3`}>
        <Tab label="Levels" active />
        <PanelMenu label="Levels panel menu" />
      </div>
      <div className="flex gap-[9px] pt-[5px] pr-1 pl-1">
        <div className="min-w-0 flex-1">
          <div className="flex flex-col gap-[2px]">
            {bars.map(({ level, peak }) => (
              <div key={level} className="relative flex h-5 bg-[#d9d9d9]">
                <div className="w-[80%] bg-[#20a14a]" />
                <div className="bg-[#b7a31d]" style={{ width: `${(level - 48) * (100 / 60)}%` }} />
                <div className="absolute inset-y-0 w-[2px] bg-[#b7a31d]" style={{ left: `${peak * (100 / 60)}%` }} />
              </div>
            ))}
          </div>
          <div className="relative h-4 text-[8px] leading-3 text-[#555]">
            {Array.from({ length: 21 }, (_, i) => (
              <div key={i} className="absolute top-0" style={{ left: `${i * 5}%` }}>
                <div className="h-[3px] w-px bg-[#888]" />
                <span className={`block w-max pt-[1px] ${i ? "-translate-x-1/2" : ""}`}>{i ? i * 3 - 60 : "dB"}</span>
              </div>
            ))}
          </div>
        </div>
        <div className="flex flex-col gap-[2px]">
          <button type="button" aria-label="Clip left" className="size-2 rounded-[1px] border border-[#c4c4c4] bg-[#d9d9d9]" />
          <button type="button" aria-label="Clip right" className="size-2 rounded-[1px] border border-[#c4c4c4] bg-[#d9d9d9]" />
        </div>
      </div>
    </section>
  );
}

/* ---------- right column ---------- */

function CheckBox({ id, label, checked, disabled }: { id: string; label: ReactNode; checked?: boolean; disabled?: boolean }) {
  return (
    <label htmlFor={id} className="flex items-center gap-[5px]">
      <span className="relative flex">
        <input
          id={id}
          type="checkbox"
          defaultChecked={checked}
          disabled={disabled}
          className={`size-3 appearance-none rounded-[2px] border ${disabled ? "border-[#b0b0b0] bg-[#f4f4f4] checked:border-[#6fa0e0] checked:bg-[#6fa0e0]" : "border-[#858585] bg-[#fafafa]"}`}
        />
        {checked && (
          <svg viewBox="0 0 12 12" className="pointer-events-none absolute inset-0 size-3" fill="none" stroke="#fff" strokeWidth="1.8" aria-hidden="true">
            <path d="M2.8 6.5l2.3 2.3 4.2-5.600" />
          </svg>
        )}
      </span>
      {label}
    </label>
  );
}

function SoundSection({ title, bodyClass = "pt-2", children }: { title: string; bodyClass?: string; children: ReactNode }) {
  return (
    <section className="border-b border-[#d8d8d8] text-[#959595]">
      <div className="flex h-[21px] items-center gap-[6px] bg-[#e2e2e2] pl-[6px]">
        <ChevronDown className="size-[10px] text-[#555]" strokeWidth={2} />
        <CheckBox id={`enable-${title}`} label={<h3 className="font-bold text-[#1a1a1a]">{title}</h3>} />
      </div>
      <div className={`pr-[9px] pb-2 pl-[11px] ${bodyClass}`}>{children}</div>
    </section>
  );
}

const SOFT_BUTTON = "h-[18px] rounded-[2px] border border-[#d8d8d8] bg-[#f1f1f1] px-2 text-[#8a8a8a]";

const SLIDERS = [
  { label: "Sensitivity", value: 56, text: "6.0" },
  { label: "Reduce by", value: 55, text: "-18.0 dB" },
  { label: "Fades", value: 27, text: "800 ms" },
];

function EssentialSoundPanel() {
  return (
    <section className={`${PANEL} flex-1`}>
      <div className={`${TAB_ROW} pl-3`}>
        <Tab label="Essential Sound" active />
        <PanelMenu label="Essential Sound panel menu" />
        <span className="ml-[5px] flex"><Tab label="Properties" /></span>
      </div>
      <div className="flex h-[30px] shrink-0 items-center border-b border-[#dcdcdc] pr-[7px] pl-[7px]">
        <Music className="size-[13px] text-[#1b6bd0]" strokeWidth={1.8} />
        <h2 className="ml-[5px] flex-1 text-[12px] font-semibold text-[#1a1a1a]">Music</h2>
        <button type="button" className="h-[18px] rounded-[3px] border border-[#cdcdcd] bg-[#f7f7f7] px-[7px] text-[#303030]">Clear Audio Type</button>
      </div>
      <div className="flex h-[28px] shrink-0 items-center border-b border-[#d8d8d8] pr-2 pl-[7px] text-[#555]">
        <span className="w-[63px]">Preset</span>
        <Picker label="Preset" value="(Custom)" className="h-[18px] flex-1" />
        <span className="ml-[5px] flex gap-[5px]">
          <IconButton label="Save preset" className="h-5 w-[16px]"><BookmarkPlus className="size-3" strokeWidth={1.8} /></IconButton>
          <IconButton label="Delete preset" disabled className="h-5 w-[16px]"><Trash2 className="size-3" strokeWidth={1.8} /></IconButton>
        </span>
      </div>
      <SoundSection title="Loudness">
        <div className="flex items-center">
          <span className="w-[66px]">Target</span>
          <Picker label="Loudness target" value="" disabled className="h-[18px] flex-1" />
        </div>
        <button type="button" disabled className={`mt-[5px] ${SOFT_BUTTON}`}>Auto-Match</button>
        <p className="mt-[6px] text-[9px] leading-3 text-[#a2a2a2]">Not measured yet. Auto-Match measures the audio and sets the gain.</p>
      </SoundSection>
      <SoundSection title="Duration">
        <div className="flex items-center">
          <label htmlFor="target-seconds" className="w-[66px]">Target (s)</label>
          <input id="target-seconds" type="text" defaultValue="30" disabled className="h-[18px] w-[60px] rounded-[2px] border border-[#d6d6d6] bg-[#f4f4f4] pr-4 text-right text-[#8a8a8a]" />
        </div>
        <button type="button" disabled className={`mt-[5px] ${SOFT_BUTTON}`}>Apply Duration</button>
        <p className="mt-[6px] text-[9px] leading-3 text-[#a2a2a2]">Original 0:20.300. The music is stretched without changing its pitch.</p>
      </SoundSection>
      <SoundSection title="Ducking" bodyClass="pt-[6px]">
        <div className="flex">
          <span className="w-[67px] shrink-0 leading-[17px]">Duck against</span>
          <div className="flex flex-wrap gap-x-[10px] leading-[17px] text-[#8a8a8a]">
            <CheckBox id="duck-dialogue" label="Dialogue" checked disabled />
            <CheckBox id="duck-music" label="Music" disabled />
            <CheckBox id="duck-sfx" label="SFX" disabled />
            <CheckBox id="duck-ambience" label="Ambience" disabled />
          </div>
        </div>
        {SLIDERS.map(({ label, value, text }) => (
          <label key={label} className="flex h-[23px] items-center">
            <span className="w-[67px]">{label}</span>
            <input
              type="range"
              defaultValue={value}
              disabled
              className="h-[2px] w-[124px] appearance-none rounded-full bg-[#d2d2d2] [&::-webkit-slider-thumb]:size-[9px] [&::-webkit-slider-thumb]:appearance-none [&::-webkit-slider-thumb]:rounded-full [&::-webkit-slider-thumb]:bg-[#7f7f7f]"
            />
            <span className="flex-1 text-right text-[#6c9fdc]">{text}</span>
          </label>
        ))}
        <button type="button" disabled className={`mt-[4px] ${SOFT_BUTTON}`}>Generate Keyframes</button>
        <p className="mt-[6px] text-[9px] leading-3 text-[#a2a2a2]">Keyframes are written to the clip volume envelope and follow the clips of the chosen types.</p>
      </SoundSection>
    </section>
  );
}

function SelectionPanel() {
  return (
    <section className={`${PANEL} h-[95px] shrink-0`}>
      <div className={`${TAB_ROW} pl-3`}>
        <Tab label="Selection/View" active />
        <PanelMenu label="Selection/View panel menu" />
      </div>
      <table className="mt-[2px] mr-[9px] ml-[9px] table-fixed text-center text-[#1b6bd0]">
        <thead>
          <tr className="h-[21px] text-[#444]">
            <td className="w-[49px]" />
            <th className="font-medium">Start</th>
            <th className="font-medium">End</th>
            <th className="font-medium">Duration</th>
          </tr>
        </thead>
        <tbody>
          <tr className="h-[20px]">
            <th className="text-left font-normal text-[#444]">Selection</th>
            <td>0:20.000</td>
            <td>0:30.000</td>
            <td>0:10.000</td>
          </tr>
          <tr className="h-[21px]">
            <th className="text-left font-normal text-[#444]">View</th>
            <td>0:00.000</td>
            <td>0:42.500</td>
            <td>0:42.500</td>
          </tr>
        </tbody>
      </table>
    </section>
  );
}

function StatusBar() {
  return (
    <footer className="flex h-[19px] shrink-0 items-center border-t border-[#cbcbcb] bg-[#e4e4e4] pr-[9px] pl-[9px] text-[9px] text-[#606060]">
      <span className="flex-1">Opened in 0.01 seconds</span>
      <span className="border-l border-[#cbcbcb] px-[9px]">48000 Hz • 32-bit Mixing</span>
      <span className="border-l border-[#cbcbcb] px-[9px]">0:40.638</span>
    </footer>
  );
}

export default function App() {
  return (
    <div className="flex h-screen min-h-[640px] flex-col bg-[#d5d5d5] font-['Inter',sans-serif] text-[10px] leading-4 text-[#3a3a3a]">
      <TitleBar />
      <ToolBar />
      <main className="grid min-h-0 flex-1 grid-cols-[224px_minmax(0,1fr)_269px] gap-1 px-[3px] pt-[3px] pb-[2px]">
        <div className="flex min-h-0 min-w-0 flex-col gap-1">
          <FilesPanel />
          <MarkersPanel />
          <HistoryPanel />
        </div>
        <div className="flex min-h-0 min-w-0 flex-col gap-1">
          <EditorPanel />
          <LevelsPanel />
        </div>
        <div className="flex min-h-0 min-w-0 flex-col gap-1">
          <EssentialSoundPanel />
          <SelectionPanel />
        </div>
      </main>
      <StatusBar />
    </div>
  );
}
